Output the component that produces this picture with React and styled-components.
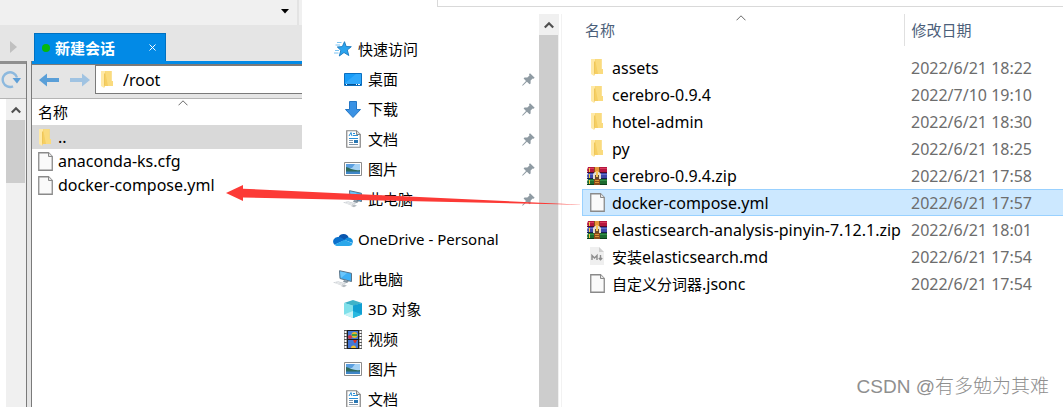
// React
import { useState } from "react";

// CSS
import styled, { createGlobalStyle } from "styled-components";

const GlobalStyle = createGlobalStyle`
  * {
    box-sizing: border-box;
  }
  body {
    margin: 0;
    background-color: #ffffff;
    color: #000000;
    font-family: "Noto Sans", "Noto Sans CJK SC", sans-serif;
    font-size: 15px;
    line-height: 24px;
  }
  button, input {
    font: inherit;
    color: inherit;
    padding: 0;
    border: none;
    background: none;
  }
  button {
    cursor: pointer;
  }
  svg {
    display: block;
    flex-shrink: 0;
  }
`;

const Desktop = styled.div`
  position: relative;
  display: flex;
  height: 100vh;
  overflow: hidden;
`;

// ---------- Terminal client ----------

const Client = styled.section`
  display: flex;
  flex-direction: column;
  flex: 0 0 302px;
  min-width: 0;
  background-color: #e5e5e5;
`;

const TopStrip = styled.div`
  display: flex;
  align-items: stretch;
  height: 25px;
  background-color: #f0f0f0;
`;

const StripMain = styled.div`
  display: flex;
  flex: 1;
  justify-content: flex-end;
  align-items: center;
  border-right: 2px solid #e3e3e3;
  padding: 0 4px 2px 0;
`;

const StripEnd = styled.div`
  width: 3px;
`;

const IconButton = styled.button`
  display: flex;
  align-items: center;
  justify-content: center;
  flex-shrink: 0;
  width: ${(props) => props.$width || 20}px;
  height: ${(props) => props.$height || 20}px;
`;

const TabStrip = styled.div`
  display: flex;
  align-items: flex-end;
  height: 36px;
  padding-left: 3px;
  gap: 11px;
`;

const Tab = styled.div`
  display: flex;
  align-items: center;
  width: 132px;
  height: 28px;
  padding: 0 6px 0 7px;
  background-color: #028ae6;
  border: 1px solid #0071c1;
  border-bottom: none;
  color: #ffffff;
  font-weight: bold;
`;

const TabLabel = styled.button`
  display: flex;
  flex: 1;
  align-items: center;
  gap: 5px;
  font-weight: bold;
`;

const Dot = styled.span`
  width: 8px;
  height: 8px;
  border-radius: 50%;
  background-color: #06b80c;
`;

const ClientBody = styled.div`
  display: flex;
  flex: 1;
  min-height: 0;
  gap: 4px;
`;

const SidePane = styled.div`
  display: flex;
  flex-direction: column;
  flex: 0 0 27px;
  border-top: 3px solid #8f8f8f;
  border-right: 1px solid #7a7a7a;
  background-color: #ffffff;
`;

const SideToolbar = styled.div`
  display: flex;
  align-items: center;
  height: 35px;
  padding: 0 0 3px 1px;
  background-color: #e5e5e5;
  border-bottom: 1px solid #b4b4b4;
`;

const RemotePane = styled.div`
  display: flex;
  flex-direction: column;
  flex: 1;
  min-width: 0;
  border-left: 1px solid #7a7a7a;
  background-color: #ffffff;
`;

const ActiveBar = styled.div`
  height: 4px;
  background-color: #028ae6;
  border-bottom: 1px solid #7a7a7a;
`;

const PathBar = styled.div`
  display: flex;
  align-items: center;
  height: 34px;
  padding-bottom: 4px;
  background-color: #e5e5e5;
  border-bottom: 1px solid #b4b4b4;
`;

const PathField = styled.label`
  display: flex;
  align-items: center;
  flex: 1;
  min-width: 0;
  gap: 9px;
  height: 29px;
  margin-left: 1px;
  padding-left: 5px;
  background-color: #ffffff;
  border: 1px solid #7a7a7a;
  border-right: none;
`;

const PathInput = styled.input`
  flex: 1;
  min-width: 0;
  font-size: 16px;
  &:focus {
    outline: none;
  }
`;

const RemoteTable = styled.table`
  width: 100%;
  border-collapse: collapse;
`;

const RemoteHead = styled.th`
  position: relative;
  height: 26px;
  padding: 0 6px;
  text-align: left;
  font-weight: normal;
`;

const RemoteCell = styled.td`
  height: 24px;
  padding: 0 0 0 6px;
  background-color: ${(props) => (props.$active ? "#d9d9d9" : "transparent")};
`;

const RemoteName = styled.div`
  display: flex;
  align-items: center;
  gap: 5px;
  height: 24px;
  font-size: 16px;
`;

// ---------- Explorer ----------

const Explorer = styled.section`
  display: flex;
  flex-direction: column;
  flex: 1;
  min-width: 0;
`;

const RibbonEdge = styled.div`
  height: 7px;
  margin-left: 135px;
  border-left: 1px solid #d9d9d9;
  border-bottom: 1px solid #d9d9d9;
`;

const ExplorerBody = styled.div`
  display: flex;
  flex: 1;
  min-height: 0;
  padding-top: 7px;
`;

const Tree = styled.nav`
  display: flex;
  flex-direction: column;
  flex: 0 0 237px;
  gap: 10px;
  padding-top: 20px;
  overflow: hidden;
`;

const TreeGroup = styled.div`
  display: flex;
  flex-direction: column;
`;

const TreeItem = styled.a`
  display: flex;
  align-items: center;
  flex-shrink: 0;
  height: 30px;
  padding-left: ${(props) => (props.$child ? 41 : 31)}px;
  padding-right: 4px;
  gap: 5px;
  color: inherit;
  text-decoration: none;
`;

const TreeLabel = styled.span`
  flex: 1;
`;

const IconBox = styled.span`
  display: flex;
  align-items: center;
  justify-content: center;
  flex-shrink: 0;
  width: ${(props) => props.$width || 20}px;
`;

const Scrollbar = styled.div`
  display: flex;
  flex-direction: column;
  width: 20px;
  flex: 1 0 auto;
  align-self: flex-end;
  background-color: #f0f0f0;
`;

const TreeScroll = styled.div`
  display: flex;
  flex-direction: column;
  border-right: 1px solid #f2f2f2;
  padding-right: 2px;
`;

const Thumb = styled.div`
  width: 19px;
  flex: ${(props) => (props.$short ? "0 0 63px" : "1")};
  background-color: #cdcdcd;
`;

const FileArea = styled.main`
  flex: 1;
  min-width: 0;
  padding-left: 20px;
  overflow: hidden;
`;

const FileTable = styled.table`
  width: 100%;
  table-layout: fixed;
  border-collapse: collapse;
`;

const FileHead = styled.th`
  position: relative;
  height: 32px;
  width: ${(props) => (props.$wide ? "322px" : "auto")};
  padding: 0 0 0 ${(props) => (props.$wide ? 3 : 7)}px;
  border-right: ${(props) => (props.$wide ? "1px solid #e0e0e0" : "none")};
  color: #4c607a;
  text-align: left;
  font-weight: normal;
`;

const SortMark = styled.svg`
  position: absolute;
  top: 1px;
  left: ${(props) => props.$left || "48%"};
`;

const FileRows = styled.tbody`
  &::before {
    content: "";
    display: block;
    height: 8px;
  }
`;

const FileRow = styled.tr`
  background-color: ${(props) => (props.$selected ? "#cce8ff" : "transparent")};
  box-shadow: ${(props) => (props.$selected ? "inset 1px 1px #99d1ff, inset 0 -1px #99d1ff" : "none")};
  cursor: default;
`;

const NameCell = styled.td`
  height: 27px;
  padding: 0 0 0 5px;
`;

const DateCell = styled.td`
  padding: 0 0 0 7px;
  color: #6d6d6d;
  font-size: 16px;
  white-space: nowrap;
`;

const FileName = styled.div`
  display: flex;
  align-items: center;
  gap: 5px;
  height: 27px;
  font-size: 16px;
  white-space: nowrap;
`;

const Han = styled.span`
  font-size: 15px;
`;

// ---------- Annotations ----------

const RedArrow = styled.svg`
  position: absolute;
  top: 184px;
  left: 226px;
  pointer-events: none;
`;

const Watermark = styled.p`
  position: absolute;
  right: 14px;
  bottom: 8px;
  margin: 0;
  color: #8f8f8f;
  font-family: "Liberation Sans", "Noto Sans CJK SC", sans-serif;
  font-size: 19px;
  font-weight: 300;
`;

// ---------- Icons ----------

const FolderIcon = () => (
  <svg width="13" height="17" viewBox="0 0 13 17">
    <path d="M4 0H10.500V10H12V15H4Z" fill="#f6cf62" />
    <path d="M4 0H10.500V10H12V15H7Z" fill="#fadb7e" />
    <path d="M0 0H4V14L3 17L0 15Z" fill="#ffe9a6" />
    <path d="M3 3L4 2V14L3 17Z" fill="#eec65a" />
  </svg>
);

const FileIcon = () => (
  <svg width="15" height="19" viewBox="0 0 15 19">
    <path d="M.75 .75H10.500L14.250 4.500V18.250H.75Z" fill="#fafafa" stroke="#8a8a8a" strokeWidth="1.300" />
    <path d="M10.500 .75V4.500H14.250" fill="#e4e4e4" stroke="#8a8a8a" />
  </svg>
);

const ZipIcon = () => (
  <svg width="20" height="18" viewBox="0 0 20 18">
    <path d="M1 0H20V6H1L0 3Z" fill="#b5173f" />
    <path d="M1 1H20V2H1Z" fill="#d83a5c" />
    <path d="M0 5H20V6H0Z" fill="#4f0a28" />
    <path d="M1 6H20V12H1L0 9Z" fill="#3d48a8" />
    <path d="M1 7H20V8H1Z" fill="#6470cc" />
    <path d="M0 11H20V12H0Z" fill="#151d4a" />
    <path d="M1 12H20V18H1L0 15Z" fill="#1b6b30" />
    <path d="M1 13H20V14H1Z" fill="#2f9148" />
    <path d="M0 17H20V18H0Z" fill="#0b3d18" />
    <path d="M2 1H3V5H2ZM2 7H3V11H2ZM2 13H3V17H2Z" fill="#f4c93c" />
    <path d="M7 0H13V18H7Z" fill="#8a4a1c" />
    <path d="M8 0H12V5H8Z" fill="#e8983a" />
    <path d="M6 7L8 5H12L14 7V12H12V8H8V12H6Z" fill="#e4ded2" />
    <path d="M8 8H12V12H8Z" fill="#6b4a2c" />
    <path d="M9 4H11V10H9Z" fill="#f6c557" />
    <path d="M8 13H12V14H8ZM8 15H12V16H8Z" fill="#d8953a" />
  </svg>
);

const MarkdownIcon = () => (
  <svg width="16" height="19" viewBox="0 0 16 19">
    <path d="M1 0H10L15 5V18H1Z" fill="#efefef" />
    <path d="M10 0L15 5H10Z" fill="#cfcfcf" />
    <path d="M3 13V8.500L5.500 11L8 8.500V13M11.500 8V12.500M9.800 11L11.500 12.800L13.200 11" fill="none" stroke="#8c8c8c" strokeWidth="1.400" />
  </svg>
);

const StarIcon = () => (
  <svg width="18" height="16" viewBox="0 0 18 16">
    <path d="M10.500 .7L12.200 5.500L17.300 5.700L13.300 9L14.800 14.500L10 11.500L5.300 15L6.800 9.300L3.300 6L8.300 5.600Z" fill="#2ba4ee" stroke="#1878be" strokeWidth=".9" />
    <path d="M3 1.500H7.500M1.500 4H6M1 9.500H5M0 12H4.500" stroke="#7cc4f2" />
  </svg>
);

const DesktopIcon = () => (
  <svg width="18" height="13" viewBox="0 0 18 13">
    <path d="M.5 .5H17.500V12.500H.5Z" fill="#189cf8" stroke="#0a6fc0" />
    <path d="M1 10L12 1H17V11H1Z" fill="#3fb0ff" opacity=".6" />
    <path d="M1 11H17V12H1Z" fill="#075493" />
    <path d="M2 11H3V12H2ZM12 11H13V12H12ZM14 11H16V12H14Z" fill="#ffffff" />
  </svg>
);

const DownloadIcon = () => (
  <svg width="16" height="17" viewBox="0 0 16 17">
    <path d="M4.500 .5H11.500V8.500H15.500L8 16.500L.5 8.500H4.500Z" fill="#3a92e4" stroke="#2477c6" />
  </svg>
);

const DocumentIcon = () => (
  <svg width="15" height="18" viewBox="0 0 15 18">
    <path d="M.75 .75H10.500L14.250 4.500V17.250H.75Z" fill="#ffffff" stroke="#858585" strokeWidth="1.200" />
    <path d="M10.500 .75V4.500H14.250" fill="#dddddd" stroke="#858585" />
    <path d="M3 6L5 2.500L6 6M7 3.500H9M7 5.500H12M3 8.500H12" fill="none" stroke="#2b8fd6" />
    <path d="M3 10.500H7M3 12.500H7M3 14.500H12" stroke="#8095a8" />
    <path d="M8 10H12V13H8Z" fill="#2877b4" />
  </svg>
);

const PictureIcon = () => (
  <svg width="18" height="14" viewBox="0 0 18 14">
    <path d="M.5 .5H17.500V13.500H.5Z" fill="#ffffff" stroke="#8c8c8c" />
    <path d="M2 2H16V12H2Z" fill="#a6d2f5" />
    <path d="M2 2H11L8 6H2Z" fill="#5b9fe0" />
    <path d="M2 5C6 6 10 9 16 8V10H2Z" fill="#2f6b5c" />
    <path d="M2 9.500H16V12H2Z" fill="#3f86c8" />
  </svg>
);

const ComputerIcon = () => (
  <svg width="20" height="18" viewBox="0 0 20 18">
    <path d="M6.500 .7L18.500 3.300V11.500L7 8.500Z" fill="#3fb0f5" stroke="#5d7487" />
    <path d="M7 1.500L14 3L8 8Z" fill="#7fd0ff" opacity=".7" />
    <path d="M11 10L16 11.300L14 13L10 12Z" fill="#8796a1" />
    <path d="M0 12.500L5 11.200L13.500 13.800L8.500 15.500Z" fill="#c9ced2" />
    <path d="M8 16L11 14.800L14 15.600L11 17.200Z" fill="#b6bcc1" />
    <path d="M2 12.700L9 14.700M4 12L11 14.200" stroke="#ffffff" strokeWidth=".6" />
  </svg>
);

const OneDriveIcon = () => (
  <svg width="20" height="13" viewBox="0 0 20 13">
    <path d="M5.500 4.200A5.500 5.500 0 0 1 15.700 4.500L11 8Z" fill="#0a56ae" />
    <path d="M5.300 4A4.600 4.600 0 0 0 1.500 11.800L12 7L8.500 4.700A6 6 0 0 0 5.300 4Z" fill="#0a70cc" />
    <path d="M15.700 4.500A4.300 4.300 0 0 1 19.700 10L11.500 7C13 5.200 14 4.500 15.700 4.500Z" fill="#1590df" />
    <path d="M1.500 11.800L11.500 6.800L19.700 10.500C19 12.200 18 13 16 13H4.700C3.500 13 2.200 12.600 1.500 11.800Z" fill="#2aa7ea" />
  </svg>
);

const CubeIcon = () => (
  <svg width="18" height="18" viewBox="0 0 18 18">
    <path d="M0 3L9 0L18 3L9 6Z" fill="#3fb3c8" />
    <path d="M0 3L9 5.500V18L0 14.500Z" fill="#7fe0ea" />
    <path d="M9 5.500L18 3V14.500L9 18Z" fill="#119fd2" />
    <path d="M0 14.500L9 11V18Z" fill="#c8f3f6" />
    <path d="M9 11L18 14.500L9 18Z" fill="#28b9e0" />
  </svg>
);

const VideoIcon = () => (
  <svg width="18" height="19" viewBox="0 0 18 19">
    <path d="M0 0H18V19H0Z" fill="#5a5a5a" />
    <path d="M1.500 1V19M16.500 1V19" stroke="#ffffff" strokeWidth="2" strokeDasharray="2 1" />
    <path d="M3 0H15V19H3Z" fill="#1d1d1d" />
    <path d="M4 1H14V9H4ZM4 10H14V18H4Z" fill="#4377d6" />
    <circle cx="10.500" cy="5" r="3" fill="#e9b52b" />
    <path d="M8 4H13V6H8Z" fill="#3da046" />
    <circle cx="6" cy="7" r="2" fill="#d5384a" />
    <path d="M9 10H13L11.500 13H10.500Z" fill="#d93025" />
    <path d="M7 18A2.500 2.500 0 0 1 12 18Z" fill="#f0c02e" />
  </svg>
);

const PinIcon = () => (
  <svg width="13" height="13" viewBox="0 0 13 13">
    <path d="M8 .3L12.700 4.700L11.500 5.800L10.700 5.500L8.600 7.600V10.500L7.600 11.300L4.900 8.800L1 12.600L.2 12.700L.3 11.900L4 8L1.600 5.500L2.500 4.500L5.300 4.600L7.500 2.400L7 1.300Z" fill="#8f9ba3" />
  </svg>
);

const RefreshIcon = () => (
  <svg width="20" height="19" viewBox="0 0 20 19">
    <path d="M16 7.500A7.300 7.300 0 1 0 12 16.300" fill="none" stroke="#8db9de" strokeWidth="2.400" />
    <path d="M11.500 8H20L16 13.500Z" fill="#5d9fd8" />
  </svg>
);

const ArrowIcon = ({ color, flip }) => (
  <svg width="20" height="14" viewBox="0 0 20 14">
    <path
      d={flip ? "M20 7L12 .5V5H0V9H12V13.500Z" : "M0 7L8 .5V5H20V9H8V13.500Z"}
      fill={color}
    />
  </svg>
);

const CaretUp = () => (
  <svg width="10" height="8" viewBox="0 0 10 8">
    <path d="M.8 6.500L5 2.300L9.200 6.500" fill="none" stroke="#505050" strokeWidth="2.200" />
  </svg>
);

const Chevron = ({ left }) => (
  <SortMark $left={left} width="10" height="6" viewBox="0 0 10 6">
    <path d="M.5 5.300L5 .8L9.500 5.300" fill="none" stroke="#6a6a6a" />
  </SortMark>
);

// ---------- Data ----------

const remoteFiles = [
  { name: "..", folder: true },
  { name: "anaconda-ks.cfg" },
  { name: "docker-compose.yml" },
];

const treeGroups = [
  [
    { label: "快速访问", icon: StarIcon },
    { label: "桌面", icon: DesktopIcon, child: true, pinned: true },
    { label: "下载", icon: DownloadIcon, child: true, pinned: true },
    { label: "文档", icon: DocumentIcon, child: true, pinned: true },
    { label: "图片", icon: PictureIcon, child: true, pinned: true },
    { label: "此电脑", icon: ComputerIcon, child: true, pinned: true },
  ],
  [{ label: "OneDrive - Personal", icon: OneDriveIcon }],
  [
    { label: "此电脑", icon: ComputerIcon },
    { label: "3D 对象", icon: CubeIcon, child: true },
    { label: "视频", icon: VideoIcon, child: true },
    { label: "图片", icon: PictureIcon, child: true },
    { label: "文档", icon: DocumentIcon, child: true },
  ],
];

const files = [
  { name: "assets", date: "2022/6/21 18:22", icon: FolderIcon },
  { name: "cerebro-0.9.4", date: "2022/7/10 19:10", icon: FolderIcon },
  { name: "hotel-admin", date: "2022/6/21 18:30", icon: FolderIcon },
  { name: "py", date: "2022/6/21 18:25", icon: FolderIcon },
  { name: "cerebro-0.9.4.zip", date: "2022/6/21 17:58", icon: ZipIcon },
  { name: "docker-compose.yml", date: "2022/6/21 17:57", icon: FileIcon },
  { name: "elasticsearch-analysis-pinyin-7.12.1.zip", date: "2022/6/21 18:01", icon: ZipIcon },
  { han: "安装", name: "elasticsearch.md", date: "2022/6/21 17:54", icon: MarkdownIcon },
  { han: "自定义分词器", name: ".jsonc", date: "2022/6/21 17:54", icon: FileIcon },
];

const SessionClient = () => {
  const [path, setPath] = useState("/root");

  return (
    <Client>
      <TopStrip>
        <StripMain>
          <IconButton $width={16} aria-label="More">
            <svg width="8" height="5" viewBox="0 0 8 5">
              <path d="M0 0H8L4 4.500Z" fill="#000000" />
            </svg>
          </IconButton>
        </StripMain>
        <StripEnd />
      </TopStrip>
      <TabStrip>
        <IconButton $height={28} aria-label="Next tab">
          <svg width="7" height="12" viewBox="0 0 7 12">
            <path d="M0 0L7 6L0 12Z" fill="#c0c0c0" />
          </svg>
        </IconButton>
        <Tab>
          <TabLabel>
            <Dot />
            新建会话
          </TabLabel>
          <IconButton $width={14} aria-label="Close tab">
            <svg width="7" height="7" viewBox="0 0 7 7">
              <path d="M.5 .5L6.500 6.500M6.500 .5L.5 6.500" stroke="#ffffff" />
            </svg>
          </IconButton>
        </Tab>
      </TabStrip>
      <ClientBody>
        <SidePane>
          <SideToolbar>
            <IconButton aria-label="Refresh">
              <RefreshIcon />
            </IconButton>
          </SideToolbar>
          <Scrollbar>
            <IconButton $height={21} aria-label="Scroll up">
              <CaretUp />
            </IconButton>
            <Thumb $short />
          </Scrollbar>
        </SidePane>
        <RemotePane>
          <ActiveBar />
          <PathBar>
            <IconButton $width={34} aria-label="Back">
              <ArrowIcon color="#5a9fd8" />
            </IconButton>
            <IconButton $width={28} aria-label="Forward">
              <ArrowIcon color="#a0c3e2" flip />
            </IconButton>
            <PathField>
              <FolderIcon />
              <PathInput aria-label="Path" value={path} onChange={(e) => { setPath(e.target.value) }} />
            </PathField>
          </PathBar>
          <RemoteTable>
            <thead>
              <tr>
                <RemoteHead>
                  名称
                  <Chevron left="54%" />
                </RemoteHead>
              </tr>
            </thead>
            <tbody>
              {remoteFiles.map((file) => (
                <tr key={file.name}>
                  <RemoteCell $active={file.folder}>
                    <RemoteName>
                      <IconBox $width={15}>{file.folder ? <FolderIcon /> : <FileIcon />}</IconBox>
                      {file.name}
                    </RemoteName>
                  </RemoteCell>
                </tr>
              ))}
            </tbody>
          </RemoteTable>
        </RemotePane>
      </ClientBody>
    </Client>
  );
};

const FileExplorer = () => {
  const [selected, setSelected] = useState("docker-compose.yml");

  return (
    <Explorer>
      <RibbonEdge />
      <ExplorerBody>
        <Tree>
          {treeGroups.map((group, index) => (
            <TreeGroup key={index}>
              {group.map(({ label, icon: Icon, child, pinned }) => (
                <TreeItem key={label} href="#" $child={child}>
                  <IconBox>
                    <Icon />
                  </IconBox>
                  <TreeLabel>{label}</TreeLabel>
                  {pinned && <PinIcon />}
                </TreeItem>
              ))}
            </TreeGroup>
          ))}
        </Tree>
        <TreeScroll>
          <Scrollbar>
            <IconButton $height={21} aria-label="Scroll up">
              <CaretUp />
            </IconButton>
            <Thumb />
          </Scrollbar>
        </TreeScroll>
        <FileArea>
          <FileTable>
            <thead>
              <tr>
                <FileHead $wide>
                  名称
                  <Chevron />
                </FileHead>
                <FileHead>修改日期</FileHead>
              </tr>
            </thead>
            <FileRows>
              {files.map(({ han, name, date, icon: Icon }) => (
                <FileRow key={name} $selected={name === selected} onClick={() => setSelected(name)}>
                  <NameCell>
                    <FileName>
                      <IconBox>
                        <Icon />
                      </IconBox>
                      <span>
                        {han && <Han>{han}</Han>}
                        {name}
                      </span>
                    </FileName>
                  </NameCell>
                  <DateCell>{date}</DateCell>
                </FileRow>
              ))}
            </FileRows>
          </FileTable>
        </FileArea>
      </ExplorerBody>
    </Explorer>
  );
};

const App = () => {
  return (
    <>
      <GlobalStyle />
      <Desktop>
        <SessionClient />
        <FileExplorer />
        <RedArrow width="358" height="22" viewBox="0 0 358 22">
          <path d="M0 9L17 1V4.700L357 20.800L17 13.500V17Z" fill="#fc3a36" />
        </RedArrow>
        <Watermark>CSDN @有多勉为其难</Watermark>
      </Desktop>
    </>
  );
};

export default App;
